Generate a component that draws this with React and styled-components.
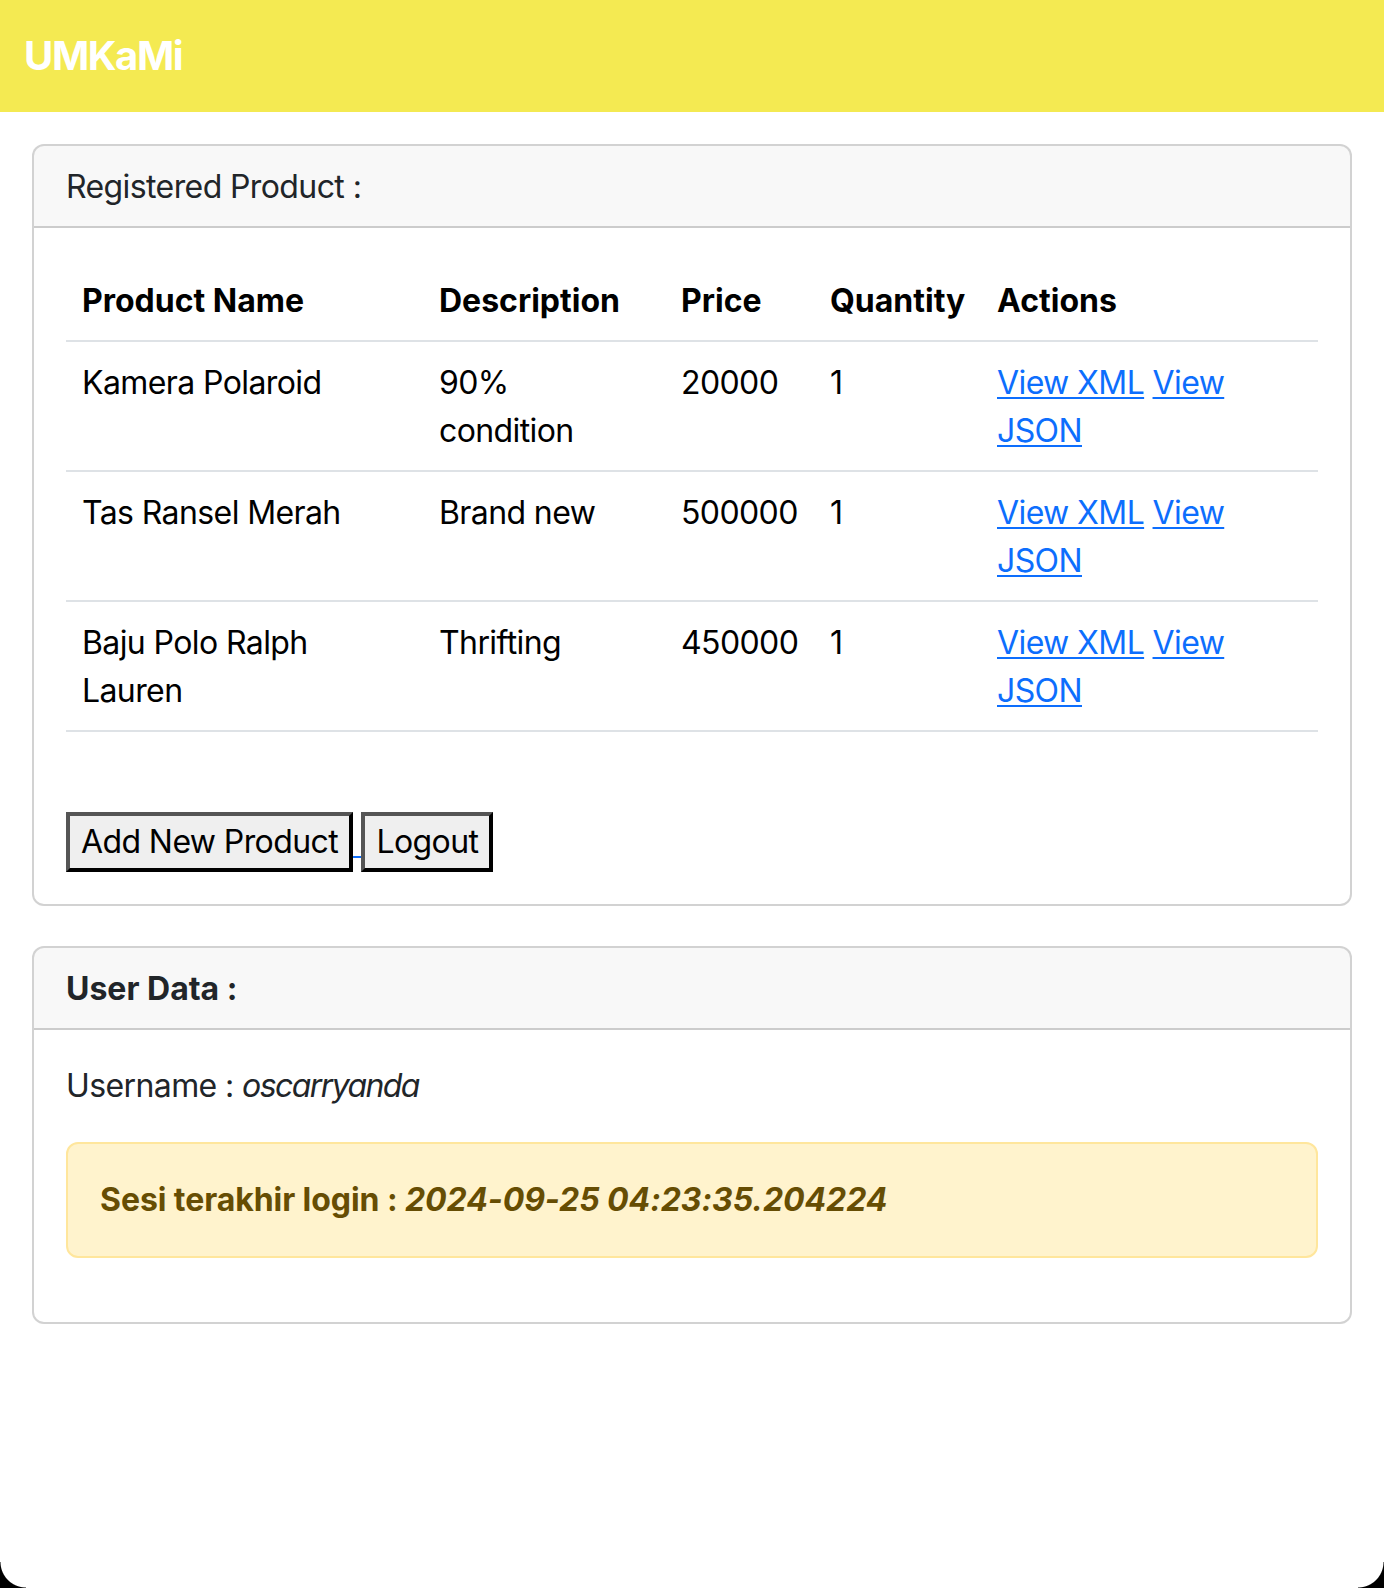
import React from 'react';
import styled, { createGlobalStyle } from 'styled-components';

const GlobalStyle = createGlobalStyle`
	* {
		box-sizing: border-box;
	}
	body {
		margin: 0;
		background: #fff;
		color: #212529;
		font-family: Inter, "Noto Sans", sans-serif;
		font-size: 32px;
		line-height: 1.5;
		letter-spacing: -0.6px;
	}
`;

const products = [
	{ name: 'Kamera Polaroid', description: '90% condition', price: 20000, quantity: 1 },
	{ name: 'Tas Ransel Merah', description: 'Brand new', price: 500000, quantity: 1 },
	{ name: 'Baju Polo Ralph Lauren', description: 'Thrifting', price: 450000, quantity: 1 },
];

const columns = [
	{ label: 'Product Name', width: 357 },
	{ label: 'Description', width: 242 },
	{ label: 'Price', width: 149 },
	{ label: 'Quantity', width: 167 },
	{ label: 'Actions', width: 337 },
];

const App = () => {
	return (
		<>
			<GlobalStyle />
			<Navbar>
				<Brand href="#">UMKaMi</Brand>
			</Navbar>

			<Main>
				<Card>
					<CardHeader>Registered Product :</CardHeader>
					<CardBody>
						<Table>
							<colgroup>
								{columns.map((c) => (
									<Col key={c.label} $width={c.width} />
								))}
							</colgroup>
							<thead>
								<tr>
									{columns.map((c) => (
										<Th key={c.label}>{c.label}</Th>
									))}
								</tr>
							</thead>
							<tbody>
								{products.map((p) => (
									<tr key={p.name}>
										<Td>{p.name}</Td>
										<Td>{p.description}</Td>
										<Td>{p.price}</Td>
										<Td>{p.quantity}</Td>
										<Td>
											<Link href="#">View XML</Link> <Link href="#">View JSON</Link>
										</Td>
									</tr>
								))}
							</tbody>
						</Table>

						<ButtonRow>
							<Link href="#">
								<Button type="button">Add New Product</Button>{' '}
							</Link>
							<Link href="#">
								<Button type="button">Logout</Button>
							</Link>
						</ButtonRow>
					</CardBody>
				</Card>

				<Card>
					<CardHeader $bold>User Data :</CardHeader>
					<CardBody>
						<Text>
							Username : <i>oscarryanda</i>
						</Text>
						<Alert>
							<b>
								Sesi terakhir login : <i>2024-09-25 04:23:35.204224</i>
							</b>
						</Alert>
					</CardBody>
				</Card>
			</Main>

			<WindowCorner $side="left" />
			<WindowCorner $side="right" />
		</>
	);
};

const Navbar = styled.nav`
	display: flex;
	align-items: center;
	padding: 16px 24px;
	background: #f4ea52;
`;

const Brand = styled.a`
	padding: 10px 0;
	font-size: 40px;
	line-height: 60px;
	font-weight: 700;
	color: #fff;
	text-decoration: none;
	letter-spacing: -1.4px;
`;

const Main = styled.main`
	display: flex;
	flex-direction: column;
	gap: 40px;
	padding: 32px 32px 0;
`;

const Card = styled.section`
	border: 2px solid rgba(0, 0, 0, 0.175);
	border-radius: 12px;
	background: #fff;
	overflow: hidden;
`;

const CardHeader = styled.div`
	padding: 17px 32px 15px;
	background: rgba(33, 37, 41, 0.03);
	border-bottom: 2px solid rgba(0, 0, 0, 0.175);
	font-weight: ${(p) => (p.$bold ? 700 : 400)};
	letter-spacing: ${(p) => (p.$bold ? '0' : '-0.6px')};
`;

const CardBody = styled.div`
	padding: 32px;
`;

const Table = styled.table`
	width: 100%;
	table-layout: fixed;
	border-collapse: collapse;
	margin-bottom: 32px;
	color: #000;
`;

const Col = styled.col`
	width: ${(p) => p.$width}px;
`;

const Th = styled.th`
	padding: 17px 16px 15px;
	text-align: left;
	font-weight: 700;
	letter-spacing: 0;
	border-bottom: 2px solid #dee2e6;
	white-space: nowrap;
`;

const Td = styled.td`
	padding: 17px 16px 15px;
	vertical-align: top;
	border-bottom: 2px solid #dee2e6;
`;

const Link = styled.a`
	color: #0d6efd;
	text-decoration: underline;
	text-decoration-thickness: 2px;
	text-underline-offset: 3px;
`;

const ButtonRow = styled.div`
	margin-top: 80px;
	line-height: 48px;
`;

const Button = styled.button`
	margin: 0;
	padding: 2px 11px;
	font: inherit;
	line-height: 48px;
	letter-spacing: inherit;
	color: #000;
	background: #efefef;
	border: 4px solid;
	border-color: #555 #000 #000 #555;
	border-radius: 0;
	vertical-align: baseline;
`;

const Text = styled.p`
	margin: 0 0 32px;

	i {
		letter-spacing: -1.6px;
	}
`;

const Alert = styled.div`
	padding: 32px;
	margin-bottom: 32px;
	background: #fff3cd;
	border: 2px solid #ffe69c;
	border-radius: 12px;
	color: #664d03;

	b {
		letter-spacing: -0.07px;
	}
`;

const WindowCorner = styled.div`
	position: fixed;
	bottom: 0;
	${(p) => p.$side}: 0;
	width: 26px;
	height: 26px;
	pointer-events: none;
	background: radial-gradient(
		circle at ${(p) => (p.$side === 'left' ? 'top right' : 'top left')},
		transparent 25px,
		#000 26px
	);
`;

export default App;
